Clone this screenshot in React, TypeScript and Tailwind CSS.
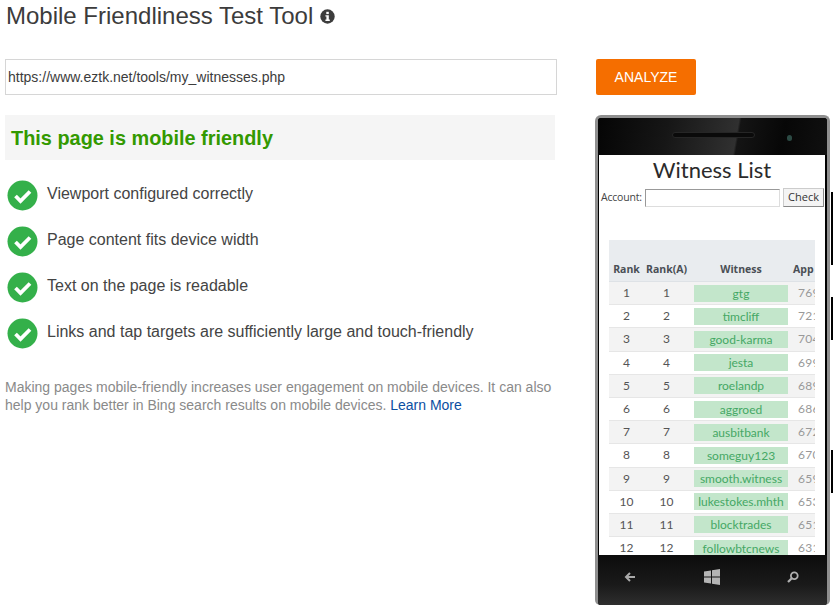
import React from "react";

const checks = [
  "Viewport configured correctly",
  "Page content fits device width",
  "Text on the page is readable",
  "Links and tap targets are sufficiently large and touch-friendly",
];

const witnesses = [
  ["1", "gtg", "76954"],
  ["2", "timcliff", "72100"],
  ["3", "good-karma", "70432"],
  ["4", "jesta", "69987"],
  ["5", "roelandp", "68911"],
  ["6", "aggroed", "68633"],
  ["7", "ausbitbank", "67210"],
  ["8", "someguy123", "67055"],
  ["9", "smooth.witness", "65912"],
  ["10", "lukestokes.mhth", "65330"],
  ["11", "blocktrades", "65177"],
  ["12", "followbtcnews", "63144"],
];

function CheckIcon() {
  return (
    <svg width="31" height="31" viewBox="0 0 31 31" className="shrink-0">
      <circle cx="15.5" cy="15.5" r="15" fill="#34b04a" />
      <path d="M8.5 16l5 5L23 11.5" fill="none" stroke="#fff" strokeWidth="3.8" />
    </svg>
  );
}

function InfoIcon() {
  return (
    <svg width="15" height="15" viewBox="0 0 15 15" className="shrink-0">
      <circle cx="7.5" cy="7.5" r="7.2" fill="#3d3d3d" />
      <rect x="6.3" y="2.8" width="2.5" height="2.3" fill="#fff" />
      <path d="M5.4 6.2h3.4v4.4h1v1.4H5.4v-1.4h1V7.6h-1z" fill="#fff" />
    </svg>
  );
}

function Phone() {
  return (
    <div className="relative mt-5 w-[235px] h-[490px]">
      {/* side buttons */}
      <div className="absolute left-[236px] top-[77px] w-[2px] h-[73px] bg-black" />
      <div className="absolute left-[236px] top-[182px] w-[2px] h-[43px] bg-black" />
      <div className="absolute left-[236px] top-[335px] w-[2px] h-[43px] bg-black" />

      <div className="flex flex-col h-full rounded-t-[6px] rounded-b-[5px] border-[3px] border-[#8f8f8f] border-b-0 bg-black overflow-hidden">
        <div className="relative h-[37px] shrink-0 bg-[linear-gradient(100deg,#050505_0%,#161616_30%,#303030_60%,#141414_61%,#070707_80%,#101010_100%)]">
          <div className="absolute left-[74px] top-[14px] w-[83px] h-[6px] rounded-full bg-[#0a0a0a] border border-[#262626]" />
          <div className="absolute left-[189px] top-[17px] w-[5px] h-[6px] rounded-full bg-[#2c4a44]" />
        </div>

        <div className="h-[400px] shrink-0 bg-white overflow-hidden ml-[1px] w-[226px] font-['Open_Sans',sans-serif] text-[#333]">
          <div className="text-center text-[22px] leading-[30px] text-[#2b2b2b] font-['Lato',sans-serif]">Witness List</div>
          <div className="flex items-center h-[21px] pl-[2px] mt-[2px]">
            <span className="text-[10.5px] text-[#444] tracking-[-0.2px] w-[44px]">Account:</span>
            <div className="w-[135px] h-[18px] border border-[#999] border-b-[#ddd] border-r-[#ddd] bg-white" />
            <div className="ml-[3px] w-[41px] h-[19px] flex items-center justify-center text-[11px] bg-[#f4f4f4] border border-[#ccc] border-b-[#888] border-r-[#888] text-[#333]">Check</div>
          </div>

          <div className="ml-[10px] mt-[32px] w-[206px] overflow-hidden">
            <div className="flex items-end h-[42px] pb-[3px] bg-[#e9ecef] text-[10.5px] font-bold text-[#4a4f55] border-b border-[#dee2e6]">
              <span className="w-[35px] shrink-0 text-center">Rank</span>
              <span className="w-[45px] shrink-0 text-center">Rank(A)</span>
              <span className="ml-[5px] w-[94px] shrink-0 text-center">Witness</span>
              <span className="ml-[5px] shrink-0 whitespace-nowrap">App</span>
            </div>
            {witnesses.map(([rank, name, approval], i) => (
              <div
                key={rank}
                className={`flex items-center h-[23.2px] border-b border-[#e6e6e6] text-[12px] font-['Lato',sans-serif] text-[#555] ${i % 2 === 0 ? "bg-[#f3f3f3]" : "bg-white"}`}
              >
                <span className="w-[35px] shrink-0 text-center">{rank}</span>
                <span className="w-[45px] shrink-0 text-center">{rank}</span>
                <span className="ml-[5px] w-[94px] shrink-0 h-[17px] leading-[17px] text-center bg-[#c3e6cb] text-[#45a865] whitespace-nowrap">{name}</span>
                <span className="ml-[10px] shrink-0 text-[#999] whitespace-nowrap tracking-[0.3px]">{approval}</span>
              </div>
            ))}
          </div>
        </div>

        <div className="flex-1 flex items-center justify-between pl-[26px] pr-[28px] pb-[7px] bg-[linear-gradient(180deg,#0c0c0c_0%,#1a1a1a_60%,#2e2e2e_100%)]">
          <svg width="12" height="12" viewBox="0 0 12 12">
            <path d="M11 6H2.5M6 2L2 6l4 4" fill="none" stroke="#a9a9a9" strokeWidth="2" />
          </svg>
          <svg width="16" height="16" viewBox="0 0 16 16">
            <path d="M0 2.5l7-1v6H0zM8 1.3l8-1.3v7.5H8zM0 8.5h7v6l-7-1zM8 8.5h8V16l-8-1.3z" fill="#b5b5b5" />
          </svg>
          <svg width="12" height="12" viewBox="0 0 12 12">
            <circle cx="7.3" cy="4.7" r="3.4" fill="none" stroke="#b0b0b0" strokeWidth="1.8" />
            <path d="M4.8 7.2L1 11" stroke="#b0b0b0" strokeWidth="2.2" />
          </svg>
        </div>
      </div>
    </div>
  );
}

export default function App() {
  return (
    <div className="flex w-[839px] h-[613px] overflow-hidden bg-white font-['Liberation_Sans',Arial,sans-serif]">
      {/* Left column */}
      <div className="ml-[5px] w-[552px] shrink-0">
        <div className="flex items-center gap-[7px] h-[32px] pl-[1px]">
          <h1 className="text-[24px] leading-[32px] text-[#3c3c3c] whitespace-nowrap">Mobile Friendliness Test Tool</h1>
          <InfoIcon />
        </div>

        <div className="mt-[27px] h-[36px] flex items-center px-[2px] border border-[#d6d6d6] text-[14px] text-[#3c3c3c]">
          https://www.eztk.net/tools/my_witnesses.php
        </div>

        <div className="mt-5 w-[550px] h-[45px] flex items-center pl-[6px] pt-[3px] bg-[#f5f5f5]">
          <h2 className="text-[19.9px] font-bold text-[#339900]">This page is mobile friendly</h2>
        </div>

        <div className="mt-5 flex flex-col gap-[15px] pl-[2px]">
          {checks.map((c) => (
            <div key={c} className="flex items-center gap-[9px] h-[31px]">
              <CheckIcon />
              <span className="text-[16px] leading-[26px] mb-[3px] text-[#444] whitespace-nowrap">{c}</span>
            </div>
          ))}
        </div>

        <p className="mt-[29px] text-[14px] leading-[18px] text-[#8a8a8a]">
          Making pages mobile-friendly increases user engagement on mobile devices. It can also help you rank better in Bing search results on mobile devices.{" "}
          <a className="text-[#0b4ea2]">Learn More</a>
        </p>
      </div>

      {/* Right column */}
      <div className="ml-[38px] pt-[59px] w-[240px] shrink-0">
        <div className="ml-[1px] w-[100px] h-[36px] flex items-center justify-center rounded-[2px] bg-[#f56e00] text-white text-[14px]">ANALYZE</div>
        <Phone />
      </div>
    </div>
  );
}
